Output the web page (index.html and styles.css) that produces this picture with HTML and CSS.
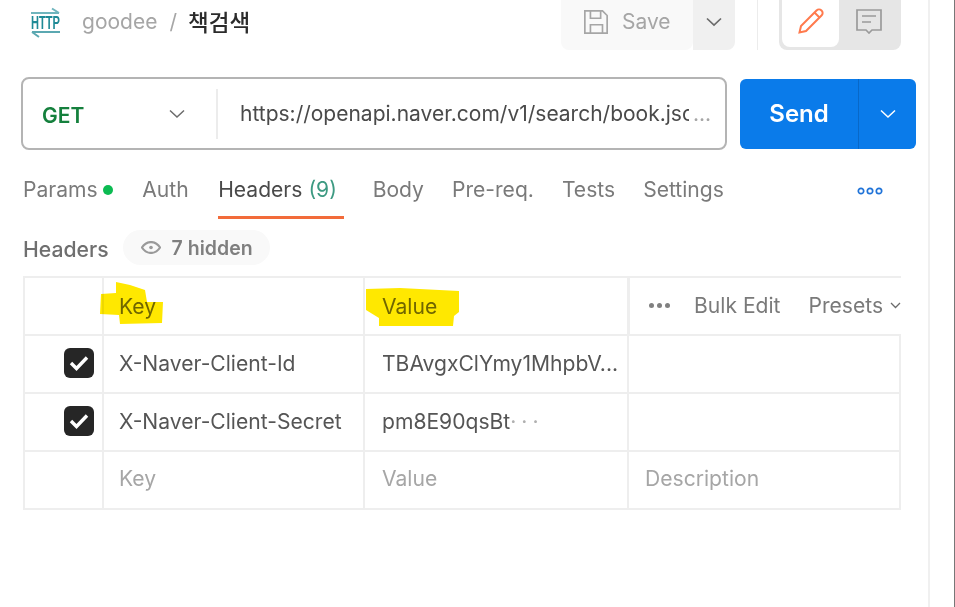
FILE: index.html
```html
<!DOCTYPE html>
<html lang="en">
<head>
<meta charset="utf-8">
<title>Postman request</title>
<link rel="stylesheet" href="styles.css">
</head>
<body>
<div class="app">
  <main class="main">
    <header class="topbar">
      <svg class="http-icon" width="32" height="32" viewBox="0 0 32 32" fill="none">
        <path d="M1 7H29M22 2.500L29 7" stroke="#6fb5bd" stroke-width="2"/>
        <path d="M30 26H2M9 31L2 26" stroke="#5ba8b1" stroke-width="2"/>
        <text x="1" y="23" textLength="29" lengthAdjust="spacingAndGlyphs" class="http-text">HTTP</text>
      </svg>
      <div class="crumbs">
        <span class="crumb-muted">goodee</span>
        <span class="crumb-slash">/</span>
        <span class="crumb-name">책검색</span>
      </div>
      <div class="save-group">
        <div class="save-btn">
          <svg width="26" height="26" viewBox="0 0 28 28" fill="none" stroke="#a6a6a6" stroke-width="1.800">
            <path d="M2 2H21L26 7V26H2Z"/><path d="M8 2V10H19V2"/><path d="M8 26V17H21V26"/>
          </svg>
          <span>Save</span>
        </div>
        <div class="save-caret">
          <svg width="16" height="10" viewBox="0 0 16 10" fill="none" stroke="#6b6b6b" stroke-width="1.700"><path d="M1 1.500L8 8L15 1.500"/></svg>
        </div>
      </div>
      <div class="vsep"></div>
      <div class="mode-toggle">
        <div class="mode-on">
          <svg width="28" height="28" viewBox="0 0 28 28" fill="none" stroke="#ff7a4d" stroke-width="2">
            <path d="M2.500 25.500L4 19L19.500 3.500C21 2 23 2 24.500 3.500C26 5 26 7 24.500 8.500L9 24Z"/><path d="M17.500 5.500L22.500 10.500"/>
          </svg>
        </div>
        <div class="mode-off">
          <svg width="26" height="25" viewBox="0 0 26 25" fill="none" stroke="#9a9a9a" stroke-width="1.700">
            <path d="M1 1H25V21H16L13 24L10 21H1Z"/><path d="M6 7H20M6 13H15"/>
          </svg>
        </div>
      </div>
    </header>

    <section class="request">
      <div class="url-box">
        <div class="method">
          <span>GET</span>
          <svg width="16" height="10" viewBox="0 0 16 10" fill="none" stroke="#6b6b6b" stroke-width="1.500"><path d="M1 1.500L8 8L15 1.500"/></svg>
        </div>
        <div class="url"><span class="url-text">https://openapi.naver.com/v1/search/book.json</span><span class="url-dots">...</span></div>
      </div>
      <div class="send">
        <div class="send-label">Send</div>
        <div class="send-caret">
          <svg width="16" height="10" viewBox="0 0 16 10" fill="none" stroke="#fff" stroke-width="1.500"><path d="M1 1.500L8 8L15 1.500"/></svg>
        </div>
      </div>
    </section>

    <nav class="tabs">
      <div class="tab tab-wide">Params<i class="dot"></i></div>
      <div class="tab tab-wide">Auth</div>
      <div class="tab tab-active">Headers <span class="count">(9)</span></div>
      <div class="tab">Body</div>
      <div class="tab">Pre-req.</div>
      <div class="tab">Tests</div>
      <div class="tab">Settings</div>
      <svg class="more" width="26" height="8" viewBox="0 0 26 8" fill="none" stroke="#1f73d8" stroke-width="1.700">
        <circle cx="4" cy="4" r="2.700"/><circle cx="13" cy="4" r="2.700"/><circle cx="22" cy="4" r="2.700"/>
      </svg>
    </nav>

    <div class="subhead">
      <span class="subhead-title">Headers</span>
      <div class="pill">
        <svg width="20" height="13" viewBox="0 0 22 14" fill="none" stroke="#9a9a9a" stroke-width="2.400">
          <path d="M1 7C4 2.500 7.500 1 11 1C14.500 1 18 2.500 21 7C18 11.500 14.500 13 11 13C7.500 13 4 11.500 1 7Z"/><circle cx="11" cy="7" r="2" fill="#9a9a9a" stroke="none"/>
        </svg>
        <span>7 hidden</span>
      </div>
    </div>

    <div class="table">
      <div class="row row-head">
        <div class="cell cell-check"></div>
        <div class="cell cell-key head-text">Key</div>
        <div class="cell cell-value head-text">Value</div>
        <div class="cell cell-desc head-actions">
          <span class="dots3"><i></i><i></i><i></i></span>
          <span class="bulk">Bulk Edit</span>
          <span class="presets">Presets
            <svg width="11" height="7" viewBox="0 0 11 7" fill="none" stroke="#6b6b6b" stroke-width="1.300"><path d="M1 1L5.500 5.500L10 1"/></svg>
          </span>
        </div>
      </div>
      <div class="row">
        <div class="cell cell-check"><span class="check"><svg width="20" height="16" viewBox="0 0 20 16" fill="none" stroke="#fff" stroke-width="3.400"><path d="M2 8L7.500 13.500L18 2.500"/></svg></span></div>
        <div class="cell cell-key">X-Naver-Client-Id</div>
        <div class="cell cell-value">TBAvgxClYmy1MhpbV...</div>
        <div class="cell cell-desc"></div>
      </div>
      <div class="row">
        <div class="cell cell-check"><span class="check"><svg width="20" height="16" viewBox="0 0 20 16" fill="none" stroke="#fff" stroke-width="3.400"><path d="M2 8L7.500 13.500L18 2.500"/></svg></span></div>
        <div class="cell cell-key">X-Naver-Client-Secret</div>
        <div class="cell cell-value">pm8E90qsBt<span class="masked">···</span></div>
        <div class="cell cell-desc"></div>
      </div>
      <div class="row">
        <div class="cell cell-check"></div>
        <div class="cell cell-key placeholder">Key</div>
        <div class="cell cell-value placeholder">Value</div>
        <div class="cell cell-desc placeholder">Description</div>
      </div>
      <svg class="marker marker-key" width="64" height="44" viewBox="0 0 64 44"><path d="M16 0L30 3L45 8L47 20L63 20L62 41L20 42L19 33L0 32L1 12L16 11Z"/></svg>
      <svg class="marker marker-value" width="94" height="40" viewBox="0 0 94 40"><path d="M0 1L34 0L93 3L93 24L88 28L87 38L13 38L13 30L0 22Z"/></svg>
    </div>
  </main>
  <div class="edge"></div>
</div>
</body>
</html>
```
FILE: styles.css
```css
* { box-sizing: border-box; }
html, body { margin: 0; padding: 0; background: #fff; }
body { font-family: Inter, "Noto Sans CJK KR", "Liberation Sans", sans-serif; color: #2e2e2e; overflow: hidden; }
.app { display: flex; width: 955px; height: 607px; }
.main { width: 930px; height: 607px; border-right: 2px solid #f0f0f0; padding: 0 0 0 21px; flex: none; }
.edge { flex: 1; border-right: 1px solid #777; }

.topbar { display: flex; align-items: flex-start; height: 77px; }
.http-icon { margin: 6px 0 0 9px; flex: none; overflow: visible; }
.http-text { font: 700 18px "Liberation Sans Narrow", "Liberation Sans", sans-serif; fill: #1f8a96; }
.crumbs { display: flex; align-items: center; gap: 12px; margin: 6px 0 0 20px; width: 479px; height: 30px; font-size: 21px; }
.crumb-muted, .crumb-slash { color: #a6a6a6; }
.crumb-name { margin: -1px 0 0 -1px; font-size: 22.500px; font-weight: 500; color: #2b2b2b; }
.save-group { display: flex; width: 174px; height: 50px; border-radius: 0 0 8px 8px; overflow: hidden; flex: none; }
.save-btn { display: flex; align-items: center; gap: 13px; width: 132px; padding: 0 0 7px 22px; background: #f9f9f9; color: #a6a6a6; font-size: 21px; border-radius: 0 0 8px 0; }
.save-caret { display: flex; align-items: center; justify-content: center; flex: 1; padding-bottom: 6px; background: #f0f0f0; }
.vsep { width: 1px; height: 50px; background: #ececec; margin: 0 21px 0 22px; flex: none; }
.mode-toggle { display: flex; width: 122px; height: 50px; padding: 0 3px 3px; background: #e6e6e6; border-radius: 0 0 8px 8px; flex: none; }
.mode-on { display: flex; align-items: center; justify-content: center; width: 57px; height: 47px; padding-bottom: 5px; background: #fff; border-radius: 0 0 8px 8px; }
.mode-off { display: flex; align-items: center; justify-content: center; flex: 1; padding-bottom: 5px; }

.request { display: flex; gap: 13px; width: 895px; align-items: center; }
.url-box { display: flex; align-items: center; width: 706px; height: 73px; border: 2px solid #b4b4b4; border-radius: 8px; flex: none; }
.method { display: flex; align-items: center; justify-content: space-between; width: 195px; height: 50px; padding: 0 31px 0 19px; border-right: 2px solid #ececec; color: #15803d; font-weight: 600; font-size: 21px; flex: none; }
.method span { padding-top: 3px; }
.url { display: flex; align-items: center; flex: 1; min-width: 0; padding-left: 22px; font-size: 21px; color: #4a4a4a; }
.url-text { display: block; width: 449px; overflow: hidden; white-space: nowrap; flex: none; }
.url-dots { color: #a6a6a6; margin-left: 4px; }
.send { display: flex; width: 176px; height: 70px; background: #0a7bea; border-radius: 6px; color: #fff; flex: none; }
.send-label { display: flex; align-items: center; justify-content: center; width: 119px; border-right: 1px solid #0868c8; font-size: 24px; font-weight: 600; }
.send-caret { display: flex; align-items: center; justify-content: center; flex: 1; }

.tabs { display: flex; align-items: flex-start; width: 880px; height: 70px; margin: 0 0 0 2px; padding-top: 26px; font-size: 21.100px; color: #7a7a7a; }
.tab { position: relative; height: 43px; line-height: 28px; margin-right: 28px; white-space: nowrap; flex: none; }
.tab-wide { margin-right: 29.500px; }
.tab-active { width: 126px; margin-right: 28.500px; color: #4a4a4a; }
.tab-active::after { content: ""; position: absolute; left: 0; width: 126px; top: 40px; height: 3px; background: #f26b3a; }
.count { color: #3d9a82; }
.dot { display: inline-block; width: 10px; height: 10px; background: #0cbb52; border-radius: 50%; margin: 0 0 2px 5px; }
.more { margin: 11px 20px 0 auto; }

.subhead { display: flex; align-items: center; gap: 14px; margin: 10px 0 11px 2px; height: 35px; }
.subhead-title { padding-top: 3px; font-size: 21.200px; font-weight: 500; color: #6f6f6f; }
.pill { display: flex; align-items: center; gap: 11px; height: 35px; padding: 0 17px 0 18px; background: #f9f9f9; border-radius: 18px; font-size: 19.500px; font-weight: 600; color: #7f7f7f; }

.table { position: relative; width: 878px; margin-left: 2px; border-bottom: 2px solid #eeeeee; }
.row { display: grid; grid-template-columns: 79px 261px 264px 270px; height: 58px; border: 2px solid #eeeeee; border-width: 2px 2px 0; }
.row-head { border-right: 0; }
.cell { display: flex; align-items: center; padding: 0 0 2px 16px; font-size: 21.100px; color: #555; border-right: 2px solid #eeeeee; white-space: nowrap; overflow: hidden; }
.row > .cell:last-child { border-right: 0; }
.cell-check { justify-content: flex-end; padding: 0 8px 2px 0; }
.cell-key { padding-left: 15px; }
.cell-value { padding-left: 17px; }
.head-text { padding-top: 3px; color: #707070; }
.head-actions { padding-left: 19px; border-left: 1px solid #eeeeee; color: #7a7a7a; overflow: visible; }
.dots3 { display: flex; gap: 3px; margin-right: 24px; }
.dots3 i { width: 5px; height: 5px; background: #808080; border-radius: 50%; }
.bulk { margin-right: 28px; }
.presets { display: flex; align-items: center; gap: 7px; }
.check { display: flex; align-items: center; justify-content: center; width: 30px; height: 30px; background: #262626; border-radius: 6px; }
.placeholder { padding-bottom: 3px; color: #a6a6a6; }
.masked { color: #b0b0b0; letter-spacing: 5px; }

.marker { position: absolute; mix-blend-mode: multiply; fill: #ffe800; }
.marker-key { left: 77px; top: 6px; }
.marker-value { left: 343px; top: 12px; }
```
